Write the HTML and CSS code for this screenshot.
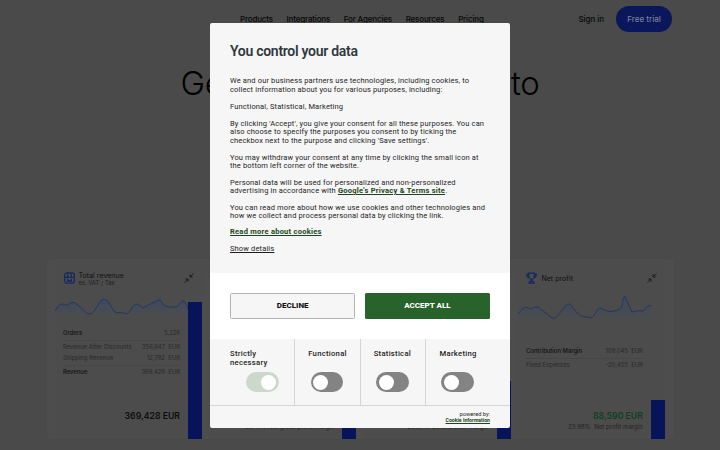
FILE: index.html
```
<!DOCTYPE html>
<html lang="en">
<head>
<meta charset="utf-8">
<title>Dashboard</title>
<link rel="stylesheet" href="styles.css">
</head>
<body>
<header class="top">
  <nav class="nav"><a>Products</a><a>Integrations</a><a>For Agencies</a><a>Resources</a><a>Pricing</a></nav>
  <a class="signin">Sign in</a>
  <a class="trial">Free trial</a>
</header>
<h1 class="hero"><span>Get</span><span>to</span></h1>
<main class="dash">
  <section class="card">
    <div class="head">
      <svg class="ico" viewBox="0 0 11 12"><rect x=".7" y=".7" width="9.6" height="10.3" rx="2.4"/><path d="M3.8 1v4M7.2 1v4M.8 5.2h9.4M3.7 10V7.4l1.8 1.7 1.8-1.7V10"/></svg>
      <div class="name">Total revenue<small>ex. VAT / Tax</small></div>
      <svg class="shrink" viewBox="0 0 10 10"><path d="M9.500.5 6 4M6 1.300V4h2.700M.5 9.500 4 6M4 8.700V6H1.300"/></svg>
    </div>
    <div class="body">
      <div class="info">
        <svg class="chart" viewBox="0 0 133 20"><defs><linearGradient id="fade" x2="0" y2="1"><stop stop-color="#3d4962"/><stop offset="1" stop-color="#4c4c4c"/></linearGradient></defs><path fill="url(#fade)" d="M0 15Q4 8 7 8T12 9.500Q17 5 20 7C27 11 30 18 35 18S44 3 49 3S57 15 61 16.500Q68 16 71 18C75 18 77 8 82 8Q86 10 88 12C95 8 99 6 105 3.500Q109 11 113 11H121C124 10 126 4 129 5Q132 8 133 13V20H0Z"/><path class="line" d="M0 15Q4 8 7 8T12 9.500Q17 5 20 7C27 11 30 18 35 18S44 3 49 3S57 15 61 16.500Q68 16 71 18C75 18 77 8 82 8Q86 10 88 12C95 8 99 6 105 3.500Q109 11 113 11H121C124 10 126 4 129 5Q132 8 133 13"/></svg>
        <div class="rows">
          <div class="row strong rule"><span>Orders</span><span>5,226</span></div>
          <div class="row"><span>Revenue After Discounts</span><span>356,647&nbsp; EUR</span></div>
          <div class="row rule"><span>Shipping Revenue</span><span>12,782&nbsp; EUR</span></div>
          <div class="row strong"><span>Revenue</span><span>369,428&nbsp; EUR</span></div>
        </div>
        <div class="total">369,428 EUR</div>
      </div>
      <div class="bar full"></div>
    </div>
  </section>
  <section class="card"><div class="head"></div><div class="body"><div class="info"><div class="note">63.41% Net gross profit margin</div></div><div class="bar half"></div></div></section>
  <section class="card"><div class="head"></div><div class="body"><div class="info"><div class="note">29.57% Contribution margin</div></div><div class="bar mid"></div></div></section>
  <section class="card">
    <div class="head">
      <svg class="ico" viewBox="0 0 11 12"><path d="M2.700.8h5.600v3.400a2.800 2.800 0 0 1-5.600 0zM2.500 1.800H.7c0 2.200.7 3.200 2.200 3.500M8.500 1.800h1.800c0 2.200-.7 3.200-2.200 3.500M5.500 7v2.200M3 10.900h5L7.300 9.200H3.700z"/></svg>
      <div class="name">Net profit</div>
      <svg class="shrink" viewBox="0 0 10 10"><path d="M9.500.5 6 4M6 1.300V4h2.700M.5 9.500 4 6M4 8.700V6H1.300"/></svg>
    </div>
    <div class="body">
      <div class="info">
        <svg class="chart tall" viewBox="0 0 133 24"><path fill="url(#fade)" d="M0 18Q4 12 7 11.500T13 13Q17 10 20 11Q27 16 34 22H37C42 19 47 8 50 8Q52 8 53 9Q58 17 63 20L74 22C77 19 79 12 82 12Q90 16 94 15.500Q103 14 104 10Q105 0 107 .5Q112 12 114 16Q121 14 125 15Q129 9 133 9V24H0Z"/><path class="line" d="M0 18Q4 12 7 11.500T13 13Q17 10 20 11Q27 16 34 22H37C42 19 47 8 50 8Q52 8 53 9Q58 17 63 20L74 22C77 19 79 12 82 12Q90 16 94 15.500Q103 14 104 10Q105 0 107 .5Q112 12 114 16Q121 14 125 15Q129 9 133 9"/></svg>
        <div class="rows late">
          <div class="row strong rule"><span>Contribution Margin</span><span>109,045&nbsp; EUR</span></div>
          <div class="row"><span>Fixed Expenses</span><span>-20,455&nbsp; EUR</span></div>
        </div>
        <div class="total green">88,590 EUR</div>
        <div class="note">23.98%&nbsp; Net profit margin</div>
      </div>
      <div class="bar low"></div>
    </div>
  </section>
</main>

<div class="modal" role="dialog">
  <div class="copy">
    <h2>You control your data</h2>
    <p>We and our business partners use technologies, including cookies, to<br>collect information about you for various purposes, including:</p>
    <p>Functional, Statistical, Marketing</p>
    <p>By clicking 'Accept', you give your consent for all these purposes. You can<br>also choose to specify the purposes you consent to by ticking the<br>checkbox next to the purpose and clicking 'Save settings'.</p>
    <p class="near">You may withdraw your consent at any time by clicking the small icon at<br>the bottom left corner of the website.</p>
    <p class="near">Personal data will be used for personalized and non-personalized<br>advertising in accordance with <a class="link">Google's Privacy &amp; Terms site</a>.</p>
    <p class="near">You can read more about how we use cookies and other technologies and<br>how we collect and process personal data by clicking the link.</p>
    <p><a class="link">Read more about cookies</a></p>
    <p><a class="details">Show details</a></p>
  </div>
  <div class="actions"><button class="decline">DECLINE</button><button class="accept">ACCEPT ALL</button></div>
  <div class="choices">
    <div class="choice first"><span>Strictly<br>necessary</span><i class="toggle on"></i></div>
    <div class="choice"><span>Functional</span><i class="toggle"></i></div>
    <div class="choice"><span>Statistical</span><i class="toggle"></i></div>
    <div class="choice"><span>Marketing</span><i class="toggle"></i></div>
  </div>
  <div class="powered">powered by:<a>Cookie Information</a></div>
</div>
</body>
</html>
```
FILE: styles.css
```
* { box-sizing: border-box; }
body { margin: 0; width: 720px; height: 450px; overflow: hidden; background: #4a4a4a; font-family: Inter, "Liberation Sans", sans-serif; color: #080808; }
h1, h2, p { margin: 0; font-weight: normal; }
svg { display: block; fill: none; }
.top { height: 37.500px; display: flex; align-items: center; font-size: 8px; padding: 0 48px 0 240px; }
.nav { display: flex; gap: 13.700px; flex: 1; letter-spacing: -.17px; }
.nav, .signin { font-weight: 500; }
.signin { letter-spacing: -.05px; }
.trial { width: 56px; height: 26px; margin-left: 12px; border-radius: 13px; background: #0a175b; color: #7b7f95; display: flex; align-items: center; justify-content: center; font-weight: 500; }
.hero { display: flex; justify-content: space-between; width: 359px; height: 221.500px; margin-left: 180.500px; padding-top: 26px; font-size: 33px; line-height: 38px; font-weight: 300; letter-spacing: -.3px; color: #000; }
.dash { width: 627px; height: 180px; margin-left: 47px; padding: 6px 9px 0 1px; display: grid; grid-template-columns: repeat(4, 154.300px); background: #4d4d4d; border-radius: 3px; box-shadow: 0 0 1px #464646; }
.card { margin-left: 7px; height: 173.500px; display: flex; flex-direction: column; background: #4c4c4c; }
.head { height: 28px; display: flex; align-items: center; padding: 0 8.500px 2px; }
.ico { width: 11px; height: 12.500px; stroke: #12285f; stroke-width: 1.200; }
.name { margin-left: 4px; padding-top: 2px; flex: 1; font-size: 7.100px; line-height: 7.500px; color: #111; }
.name small { display: block; font-size: 5.700px; line-height: 6px; letter-spacing: .1px; color: #1d1d1d; }
.shrink { width: 10px; height: 10px; stroke: #171717; stroke-width: .9; }
.body { flex: 1; display: flex; align-items: flex-end; }
.info { width: 133px; height: 100%; display: flex; flex-direction: column; padding-right: 8px; }
.chart { width: 133px; height: 20px; margin-top: 3px; flex: none; }
.chart.tall { height: 24px; }
.line { stroke: #203562; stroke-width: .9; }
.rows { margin: 10.500px 0 0 8px; font-size: 5.900px; color: #292929; }
.rows.late { margin-top: 24.500px; }
.row { display: flex; justify-content: space-between; height: 11.500px; line-height: 11.500px; }
.row.rule { height: 14px; border-bottom: 1px solid #464646; }
.row.strong span:first-child { color: #101010; font-weight: 500; }
.total { margin-top: auto; margin-bottom: 17px; line-height: 11px; text-align: right; font-size: 8.700px; font-weight: 600; color: #0c0c0c; white-space: nowrap; }
.total.green { color: #0c4023; margin-bottom: 0; }
.note { font-size: 6px; line-height: 8px; margin-bottom: 8px; text-align: right; color: #222; letter-spacing: .05px; white-space: nowrap; }
.total + .note { margin-top: 1px; }
.info > .note:only-child { margin-top: auto; }
.bar { width: 14px; background: #08145a; }
.full { height: 136.500px; }
.half { height: 70px; }
.mid { height: 58px; }
.low { height: 39px; }

.modal { position: absolute; left: 210px; top: 22.700px; width: 300px; height: 405px; border-radius: 2px; overflow: hidden; background: #f6f6f6; color: #1e1e1e; font-family: Roboto, "Liberation Sans", sans-serif; }
.copy { height: 250.600px; padding: 18.900px 20px 0; font-size: 7.500px; line-height: 8.400px; white-space: nowrap; letter-spacing: .145px; }
h2 { margin-bottom: 16.900px; font-size: 14px; line-height: 19px; font-weight: 600; letter-spacing: -.29px; color: #30383f; }
p { margin-bottom: 8.600px; }
p.near { margin-bottom: 8.100px; }
.link { color: #1d4420; font-weight: 700; text-decoration: underline; letter-spacing: .26px; }
.details { text-decoration: underline; }
.actions { height: 65.500px; padding: 20px; display: flex; gap: 9.500px; background: #fff; }
button { width: 125.500px; height: 25.500px; padding: 0; border-radius: 1.500px; font: 800 8px/1 Roboto, sans-serif; }
.decline { border: 1px solid #b2b2b2; background: #f6f6f6; color: #111; }
.accept { border: 0; background: #29632c; color: #fff; }
.choices { height: 67px; display: grid; grid-template-columns: 84px 65.500px 65px 85.500px; border-bottom: 1px solid #d5d5d5; }
.choice { padding: 10px 0 0 13.200px; border-left: 1px solid #d5d5d5; font-size: 7.700px; line-height: 9px; font-weight: 500; letter-spacing: .26px; }
.choice.first { padding-left: 20px; border: 0; }
.choice:last-child { padding-left: 14px; }
.choice span { display: block; height: 23.500px; }
.toggle { display: block; width: 32.500px; height: 20px; margin-left: 2.500px; padding: 2.500px; border-radius: 10px; background: #838383; }
.choice:last-child .toggle { margin-left: 1.700px; }
.toggle::before { content: ""; display: block; width: 15px; height: 15px; border-radius: 50%; background: #fff; }
.toggle.on { margin-left: 16px; background: #cbd8cb; }
.toggle.on::before { margin-left: auto; }
.powered { padding: 5px 20px 0; text-align: right; font-size: 5.700px; line-height: 6.500px; }
.powered a { display: block; font-size: 5.150px; font-weight: 700; color: #1d4420; text-decoration: underline; }
```
